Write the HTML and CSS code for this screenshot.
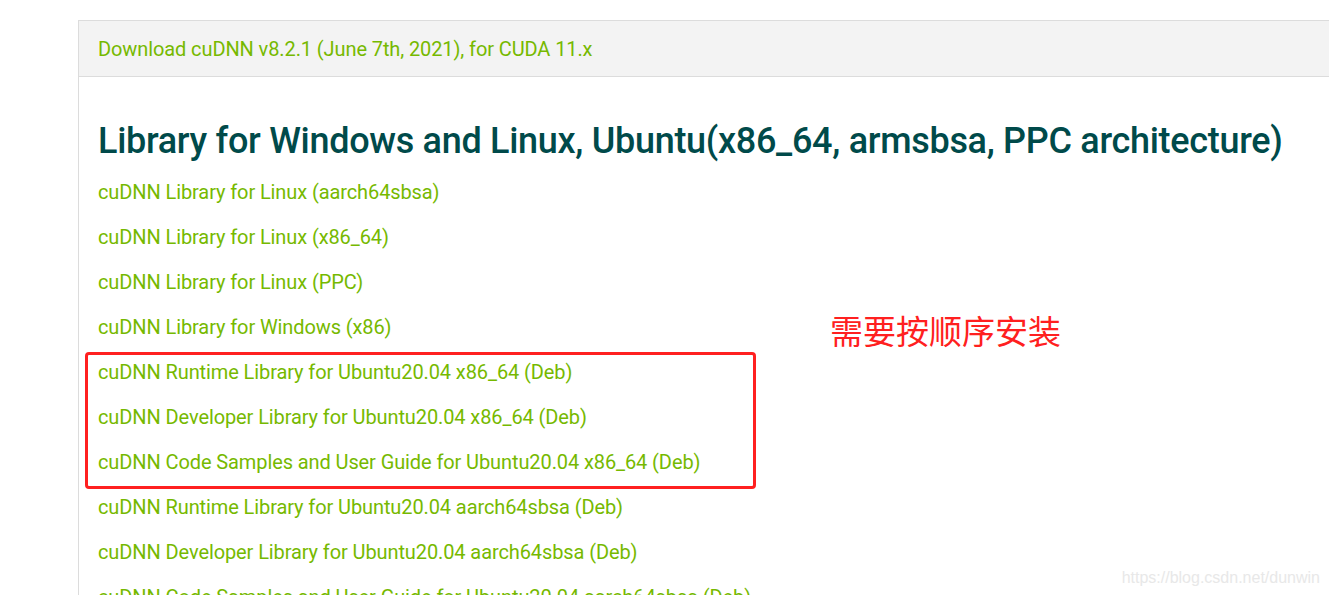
FILE: index.html
```html
<!DOCTYPE html>
<html lang="en">
<head>
<meta charset="utf-8">
<title>cuDNN Download</title>
<link rel="stylesheet" href="styles.css">
</head>
<body>
<div class="panel">
  <div class="panel-head">
    <a class="link" href="#">Download cuDNN v8.2.1 (June 7th, 2021), for CUDA 11.x</a>
  </div>
  <div class="panel-body">
    <h2 class="title">Library for Windows and Linux, Ubuntu(x86_64, armsbsa, PPC architecture)</h2>
    <ul class="links">
      <li><a class="link" href="#">cuDNN Library for Linux (aarch64sbsa)</a></li>
      <li><a class="link" href="#">cuDNN Library for Linux (x86_64)</a></li>
      <li><a class="link" href="#">cuDNN Library for Linux (PPC)</a></li>
      <li><a class="link" href="#">cuDNN Library for Windows (x86)</a></li>
      <li class="group">
        <span class="annot-box"></span>
        <span class="annot-text">需要按顺序安装</span>
        <ul class="links">
          <li><a class="link" href="#">cuDNN Runtime Library for Ubuntu20.04 x86_64 (Deb)</a></li>
          <li><a class="link" href="#">cuDNN Developer Library for Ubuntu20.04 x86_64 (Deb)</a></li>
          <li><a class="link" href="#">cuDNN Code Samples and User Guide for Ubuntu20.04 x86_64 (Deb)</a></li>
        </ul>
      </li>
      <li><a class="link" href="#">cuDNN Runtime Library for Ubuntu20.04 aarch64sbsa (Deb)</a></li>
      <li><a class="link" href="#">cuDNN Developer Library for Ubuntu20.04 aarch64sbsa (Deb)</a></li>
      <li><a class="link" href="#">cuDNN Code Samples and User Guide for Ubuntu20.04 aarch64sbsa (Deb)</a></li>
    </ul>
  </div>
</div>
<div class="watermark">https://blog.csdn.net/dunwin</div>
</body>
</html>
```

FILE: styles.css
```css
html, body {
  margin: 0;
  padding: 0;
  background: #ffffff;
  overflow: hidden;
}
body {
  position: relative;
  box-sizing: border-box;
  height: 595px;
  padding: 20px 0 0 78px;
  font-family: "Roboto", "Liberation Sans", sans-serif;
}
.panel {
  border-left: 1px solid #dcdcdc;
  border-top: 1px solid #dcdcdc;
}
.panel-head {
  height: 55px;
  background: #f3f3f3;
  border-bottom: 1px solid #dcdcdc;
  padding-left: 19px;
  display: flex;
  align-items: center;
}
.link {
  color: #76b900;
  text-decoration: none;
  font-size: 20px;
  letter-spacing: -0.1px;
}
.panel-body {
  padding-left: 19px;
}
.title {
  margin: 44px 0 9px 0;
  font-size: 36px;
  letter-spacing: -0.3px;
  font-weight: 500;
  color: #004a4a;
  line-height: 40px;
}
.links {
  list-style: none;
  margin: 0;
  padding: 0;
}
.links li {
  line-height: 45px;
  height: 45px;
  white-space: nowrap;
}
.links li.group {
  height: auto;
  position: relative;
}
.annot-box {
  position: absolute;
  left: -13px;
  top: 2px;
  width: 665px;
  height: 131px;
  border: 3px solid #ff2020;
  border-radius: 4px;
}
.annot-text {
  position: absolute;
  left: 732px;
  top: -40px;
  font-family: "Noto Sans CJK SC", sans-serif;
  font-size: 33px;
  line-height: 40px;
  color: #ff2020;
  white-space: nowrap;
}
.watermark {
  position: absolute;
  right: 9px;
  bottom: 8px;
  font-family: "Liberation Sans", sans-serif;
  font-size: 16px;
  color: #e8e8e8;
}
```
